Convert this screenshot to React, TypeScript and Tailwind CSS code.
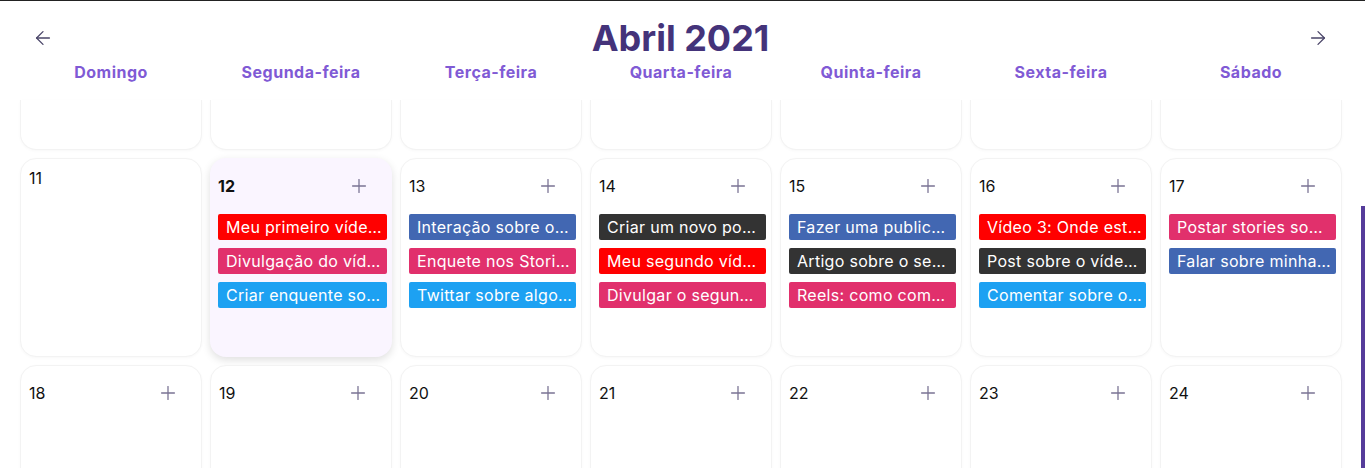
import React from "react";
import { ArrowLeft, ArrowRight, Plus } from "lucide-react";

type Ev = { t: string; c: string };

const RED = "bg-[#ff0000]";
const PINK = "bg-[#e1306c]";
const FB = "bg-[#4267b2]";
const TW = "bg-[#1da1f2]";
const DARK = "bg-[#333333]";

const week2: { d: number; today?: boolean; noAdd?: boolean; ev: Ev[] }[] = [
  { d: 11, noAdd: true, ev: [] },
  {
    d: 12,
    today: true,
    ev: [
      { t: "Meu primeiro vídeo no YouTube", c: RED },
      { t: "Divulgação do vídeo nos Stories", c: PINK },
      { t: "Criar enquente sobre o vídeo", c: TW },
    ],
  },
  {
    d: 13,
    ev: [
      { t: "Interação sobre o tema da semana", c: FB },
      { t: "Enquete nos Stories sobre o tema", c: PINK },
      { t: "Twittar sobre algo interessante", c: TW },
    ],
  },
  {
    d: 14,
    ev: [
      { t: "Criar um novo post no blog", c: DARK },
      { t: "Meu segundo vídeo no YouTube", c: RED },
      { t: "Divulgar o segundo vídeo", c: PINK },
    ],
  },
  {
    d: 15,
    ev: [
      { t: "Fazer uma publicação no grupo", c: FB },
      { t: "Artigo sobre o segundo vídeo", c: DARK },
      { t: "Reels: como começar do zero", c: PINK },
    ],
  },
  {
    d: 16,
    ev: [
      { t: "Vídeo 3: Onde estamos agora", c: RED },
      { t: "Post sobre o vídeo 3 no blog", c: DARK },
      { t: "Comentar sobre o vídeo 3", c: TW },
    ],
  },
  {
    d: 17,
    ev: [
      { t: "Postar stories sobre o vídeo", c: PINK },
      { t: "Falar sobre minha rotina", c: FB },
    ],
  },
];

const days = [
  "Domingo",
  "Segunda-feira",
  "Terça-feira",
  "Quarta-feira",
  "Quinta-feira",
  "Sexta-feira",
  "Sábado",
];

function Cell({
  d,
  today,
  noAdd,
  ev,
}: {
  d: number;
  today?: boolean;
  noAdd?: boolean;
  ev: Ev[];
}) {
  return (
    <div
      className={
        "h-[199px] rounded-2xl pl-[8px] pr-[5px] " +
        (today
          ? "pt-[10px] bg-[#faf5ff] shadow-[0_3px_8px_rgba(0,0,0,0.13)]"
          : "pt-[9px] bg-white border border-[#f3f3f3] shadow-[0_1px_3px_rgba(0,0,0,0.03)]")
      }
    >
      <div className="flex items-center justify-between pr-[14px]">
        <span
          className={
            "text-[16px] leading-[20px] text-[#111] " + (today ? "font-bold" : "")
          }
        >
          {d}
        </span>
        {!noAdd && (
          <span className="flex h-[36px] w-[28px] items-center justify-center text-[#7a7394]">
            <Plus size={22} strokeWidth={1.4} />
          </span>
        )}
      </div>
      {ev.length > 0 && (
        <div className="mt-[10px] flex flex-col gap-[8px]">
          {ev.map((e, i) => (
            <div
              key={i}
              className={
                "h-[26px] truncate rounded-[2px] pl-[8px] pr-[4px] text-[16px] leading-[26px] tracking-[0.3px] text-white " +
                e.c
              }
            >
              {e.t}
            </div>
          ))}
        </div>
      )}
    </div>
  );
}

export default function App() {
  return (
    <div
      className="relative h-[468px] w-full overflow-hidden border-t border-[#222] bg-white"
      style={{ fontFamily: "Inter, 'Noto Sans', sans-serif" }}
    >
      <div className="pl-[20px] pr-[23px]">
        <div className="h-[99px] pt-[17px]">
          <div className="flex items-center justify-between pl-[12px] pr-[13px]">
            <ArrowLeft size={22} strokeWidth={1.4} className="text-[#4a4568]" />
            <h1 className="text-[36px] font-bold leading-[40px] text-[#44337a]">
              Abril 2021
            </h1>
            <ArrowRight size={22} strokeWidth={1.4} className="text-[#4a4568]" />
          </div>
          <div className="mt-[4px] grid grid-cols-7 gap-[8px]">
            {days.map((d) => (
              <div
                key={d}
                className="text-center text-[16px] font-bold leading-[20px] tracking-[0.5px] text-[#805ad5]"
              >
                {d}
              </div>
            ))}
          </div>
        </div>
        <div className="grid grid-cols-7 gap-[8px]">
          {days.map((d) => (
            <div
              key={d}
              className="h-[50px] rounded-b-2xl border border-t-0 border-[#f3f3f3] bg-white shadow-[0_1px_3px_rgba(0,0,0,0.03)]"
            />
          ))}
        </div>
        <div className="mt-[8px] grid grid-cols-7 gap-[8px]">
          {week2.map((c) => (
            <Cell key={c.d} {...c} />
          ))}
        </div>
        <div className="mt-[8px] grid grid-cols-7 gap-[8px]">
          {[18, 19, 20, 21, 22, 23, 24].map((d) => (
            <Cell key={d} d={d} ev={[]} />
          ))}
        </div>
      </div>
      <div className="absolute right-0 top-[205px] h-[263px] w-[4px] bg-[#553c9a]" />
    </div>
  );
}
